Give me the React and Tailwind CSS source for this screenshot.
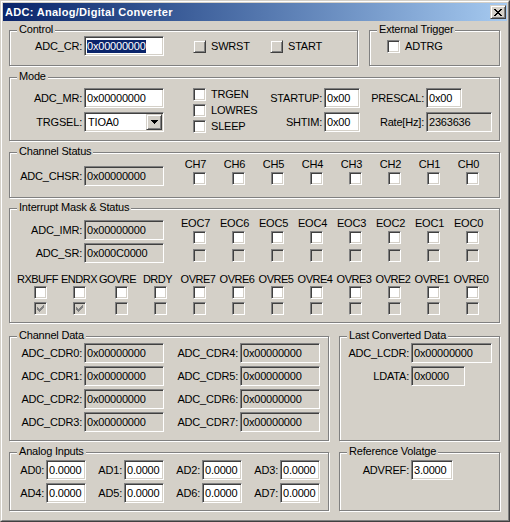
import React from "react";

const sunken =
  "border border-t-[#808080] border-l-[#808080] border-r-white border-b-white shadow-[inset_1px_1px_0_#404040,inset_-1px_-1px_0_#D4D0C8]";
const raised =
  "border border-t-[#D4D0C8] border-l-[#D4D0C8] border-r-[#404040] border-b-[#404040] shadow-[inset_1px_1px_0_#fff,inset_-1px_-1px_0_#808080]";

function Group({ title, className = "", children }) {
  return (
    <div
      className={`relative shrink-0 border border-[#808080] shadow-[inset_1px_1px_0_#fff,1px_1px_0_#fff] ${className}`}
    >
      <span className="absolute -top-[8px] left-[7px] px-[2px] bg-[#D4D0C8] leading-[13px] whitespace-nowrap">
        {title}
      </span>
      {children}
    </div>
  );
}

function Lbl({ className = "", children }) {
  return (
    <div className={`shrink-0 text-right whitespace-nowrap leading-[13px] ${className}`}>{children}</div>
  );
}

function Field({ className = "", value, ro, sel }) {
  return (
    <div
      className={`${sunken} shrink-0 h-[20px] ${ro ? "bg-[#D4D0C8]" : "bg-white"} flex items-center pl-[2px] overflow-hidden whitespace-nowrap ${className}`}
    >
      <span className={`leading-[13px] ${sel ? "bg-[#0A246A] text-white" : ""}`}>{value}</span>
    </div>
  );
}

function Check() {
  return (
    <svg width="7" height="7" viewBox="0 0 7 7" shapeRendering="crispEdges" className="absolute left-[2px] top-[2px]">
      <path
        fill="#808080"
        d="M6 0h1v1h-1z M5 1h2v1h-2z M0 2h1v1h-1z M4 2h3v1h-3z M0 3h2v1h-2z M3 3h3v1h-3z M0 4h5v1h-5z M1 5h3v1h-3z M2 6h1v1h-1z"
      />
    </svg>
  );
}

function Box({ dis, checked, flat, className = "" }) {
  if (flat) return <div className={`shrink-0 w-[13px] h-[13px] bg-[#D4D0C8] ${raised} ${className}`} />;
  return (
    <div
      className={`relative shrink-0 w-[13px] h-[13px] ${sunken} ${dis ? "bg-[#D4D0C8]" : "bg-white"} ${className}`}
    >
      {checked && <Check />}
    </div>
  );
}

function CheckRow({ label, flat, className = "" }) {
  return (
    <div className={`flex items-center h-[13px] ${className}`}>
      <Box flat={flat} />
      <span className="ml-[5px] leading-[13px] whitespace-nowrap">{label}</span>
    </div>
  );
}

function Combo() {
  return (
    <div className={`${sunken} ml-[2px] w-[80px] h-[20px] bg-white flex items-center`}>
      <span className="pl-[3px] leading-[13px]">TIOA0</span>
      <div className={`ml-auto mr-[1px] w-[16px] h-[16px] bg-[#D4D0C8] ${raised} flex items-center justify-center`}>
        <svg width="7" height="4" viewBox="0 0 7 4" shapeRendering="crispEdges">
          <path fill="#000" d="M0 0h7v1h-7z M1 1h5v1h-5z M2 2h3v1h-3z M3 3h1v1h-1z" />
        </svg>
      </div>
    </div>
  );
}

function Row({ label, lw, fw, value, ro, sel }) {
  return (
    <div className="flex items-center">
      <Lbl className={lw}>{label}</Lbl>
      <Field className={`ml-[2px] ${fw}`} value={value} ro={ro} sel={sel} />
    </div>
  );
}

export default function App() {
  const chans = [7, 6, 5, 4, 3, 2, 1, 0];
  const bottom = [
    { l: "RXBUFF", c: true, off: "mr-[6px]" },
    { l: "ENDRX", c: true, off: "mr-[1px]" },
    { l: "GOVRE", extra: true, off: "mr-[8px]" },
    { l: "DRDY", off: "mr-[6px]" },
    ...chans.map((n) => ({ l: `OVRE${n}`, off: "mr-[3px]" })),
  ];
  return (
    <div className="w-[510px] h-[522px] bg-[#D4D0C8] border border-t-[#D4D0C8] border-l-[#D4D0C8] border-r-[#404040] border-b-[#404040] text-[11px] tracking-[-0.2px] text-black font-['Liberation_Sans',Arial,sans-serif] overflow-hidden">
      <div className="h-full border border-t-white border-l-white border-r-[#808080] border-b-[#808080] p-[1px] flex flex-col">
        {/* Title bar */}
        <div className="h-[18px] shrink-0 flex items-center bg-linear-to-r from-[#0A246A] to-[#A6CAF0] pl-[2px] pr-[1px]">
          <span className="font-bold text-white tracking-[0.3px] leading-[13px]">ADC: Analog/Digital Converter</span>
          <div className={`ml-auto w-[16px] h-[14px] bg-[#D4D0C8] ${raised} flex items-center justify-center`}>
            <svg width="8" height="7" viewBox="0 0 8 7" shapeRendering="crispEdges">
              <path
                fill="#000"
                d="M0 0h2v1h-2z M6 0h2v1h-2z M1 1h2v1h-2z M5 1h2v1h-2z M2 2h4v1h-4z M3 3h2v1h-2z M2 4h4v1h-4z M1 5h2v1h-2z M5 5h2v1h-2z M0 6h2v1h-2z M6 6h2v1h-2z"
              />
            </svg>
          </div>
        </div>

        {/* Body */}
        <div className="flex flex-col pl-[6px]">
          {/* Row 1 */}
          <div className="flex mt-[9px]">
            <Group title="Control" className="w-[349px] h-[36px]">
              <div className="flex items-center pt-[5px]">
                <Row label="ADC_CR:" lw="w-[72px]" fw="w-[80px]" value="0x00000000" sel />
                <div className="ml-[29px] w-[77px]">
                  <CheckRow label="SWRST" flat />
                </div>
                <CheckRow label="START" flat />
              </div>
            </Group>
            <Group title="External Trigger" className="ml-[11px] w-[131px] h-[36px]">
              <div className="flex items-center h-[20px] mt-[5px] pl-[17px]">
                <CheckRow label="ADTRG" />
              </div>
            </Group>
          </div>

          {/* Mode */}
          <Group title="Mode" className="mt-[11px] w-[491px] h-[64px]">
            <div className="flex items-start pt-[10px]">
              <div className="flex flex-col gap-[4px]">
                <Row label="ADC_MR:" lw="w-[72px]" fw="w-[80px]" value="0x00000000" />
                <div className="flex items-center">
                  <Lbl className="w-[72px]">TRGSEL:</Lbl>
                  <Combo />
                </div>
              </div>
              <div className="ml-[29px] w-[62px] shrink-0 flex flex-col gap-[3px]">
                <CheckRow label="TRGEN" />
                <CheckRow label="LOWRES" />
                <CheckRow label="SLEEP" />
              </div>
              <div className="flex flex-col gap-[4px]">
                <Row label="STARTUP:" lw="w-[67px]" fw="w-[36px]" value="0x00" />
                <Row label="SHTIM:" lw="w-[67px]" fw="w-[36px]" value="0x00" />
              </div>
              <div className="flex flex-col gap-[4px]">
                <Row label="PRESCAL:" lw="w-[64px]" fw="w-[36px]" value="0x00" />
                <Row label="Rate[Hz]:" lw="w-[64px]" fw="w-[66px]" value="2363636" ro />
              </div>
            </div>
          </Group>

          {/* Channel Status */}
          <Group title="Channel Status" className="mt-[11px] w-[491px] h-[46px]">
            <div className="flex items-start">
              <div className="mt-[13px]">
                <Row label="ADC_CHSR:" lw="w-[72px]" fw="w-[80px]" value="0x00000000" ro />
              </div>
              <div className="ml-[16px] mt-[5px] flex">
                {chans.map((n) => (
                  <div key={n} className="w-[39px] flex flex-col items-center">
                    <div className="leading-[13px] mr-[8px] whitespace-nowrap">CH{n}</div>
                    <Box className="mt-[1px]" />
                  </div>
                ))}
              </div>
            </div>
          </Group>

          {/* Interrupt Mask & Status */}
          <Group title="Interrupt Mask & Status" className="mt-[10px] w-[491px] h-[115px]">
            <div className="flex items-start">
              <div className="mt-[11px] flex flex-col gap-[3px]">
                <Row label="ADC_IMR:" lw="w-[72px]" fw="w-[80px]" value="0x00000000" ro />
                <Row label="ADC_SR:" lw="w-[72px]" fw="w-[80px]" value="0x000C0000" ro />
              </div>
              <div className="ml-[16px] mt-[8px] flex">
                {chans.map((n) => (
                  <div key={n} className="w-[39px] flex flex-col items-center">
                    <div className="leading-[13px] mr-[8px] whitespace-nowrap">EOC{n}</div>
                    <Box className="mt-[1px]" />
                    <Box dis className="mt-[5px]" />
                  </div>
                ))}
              </div>
            </div>
            <div className="mt-[10px] pl-[11px] flex">
              {bottom.map((b) => (
                <div
                  key={b.l}
                  className={`w-[39px] shrink-0 flex flex-col items-center ${b.extra ? "ml-[3px]" : ""}`}
                >
                  <div className={`leading-[13px] whitespace-nowrap tracking-[-0.5px] ${b.off}`}>{b.l}</div>
                  <Box />
                  <Box dis checked={b.c} className="mt-[3px]" />
                </div>
              ))}
            </div>
          </Group>

          {/* Row 5 */}
          <div className="flex mt-[13px]">
            <Group title="Channel Data" className="w-[320px] h-[105px]">
              <div className="flex flex-col gap-[3px] pt-[6px]">
                {[0, 1, 2, 3].map((i) => (
                  <div key={i} className="flex items-center">
                    <Lbl className="w-[72px]">ADC_CDR{i}:</Lbl>
                    <Field className="ml-[2px] w-[80px]" value="0x00000000" ro />
                    <Lbl className="w-[74px]">ADC_CDR{i + 4}:</Lbl>
                    <Field className="ml-[2px] w-[80px]" value="0x00000000" ro />
                  </div>
                ))}
              </div>
            </Group>
            <Group title="Last Converted Data" className="ml-[10px] w-[161px] h-[105px]">
              <div className="flex flex-col gap-[3px] pt-[6px]">
                <Row label="ADC_LCDR:" lw="w-[69px]" fw="w-[81px]" value="0x00000000" ro />
                <Row label="LDATA:" lw="w-[69px]" fw="w-[54px]" value="0x0000" ro />
              </div>
            </Group>
          </div>

          {/* Row 6 */}
          <div className="flex mt-[11px]">
            <Group title="Analog Inputs" className="w-[320px] h-[59px]">
              <div className="flex flex-col gap-[3px] pt-[7px]">
                {[0, 4].map((s) => (
                  <div key={s} className="flex items-center">
                    {[0, 1, 2, 3].map((k) => (
                      <React.Fragment key={k}>
                        <Lbl className={k === 0 ? "w-[34px]" : "w-[36px]"}>AD{s + k}:</Lbl>
                        <Field className="ml-[2px] w-[40px]" value="0.0000" />
                      </React.Fragment>
                    ))}
                  </div>
                ))}
              </div>
            </Group>
            <Group title="Reference Volatge" className="ml-[10px] w-[161px] h-[59px]">
              <div className="pt-[7px]">
                <Row label="ADVREF:" lw="w-[69px]" fw="w-[42px]" value="3.0000" />
              </div>
            </Group>
          </div>
        </div>
      </div>
    </div>
  );
}
